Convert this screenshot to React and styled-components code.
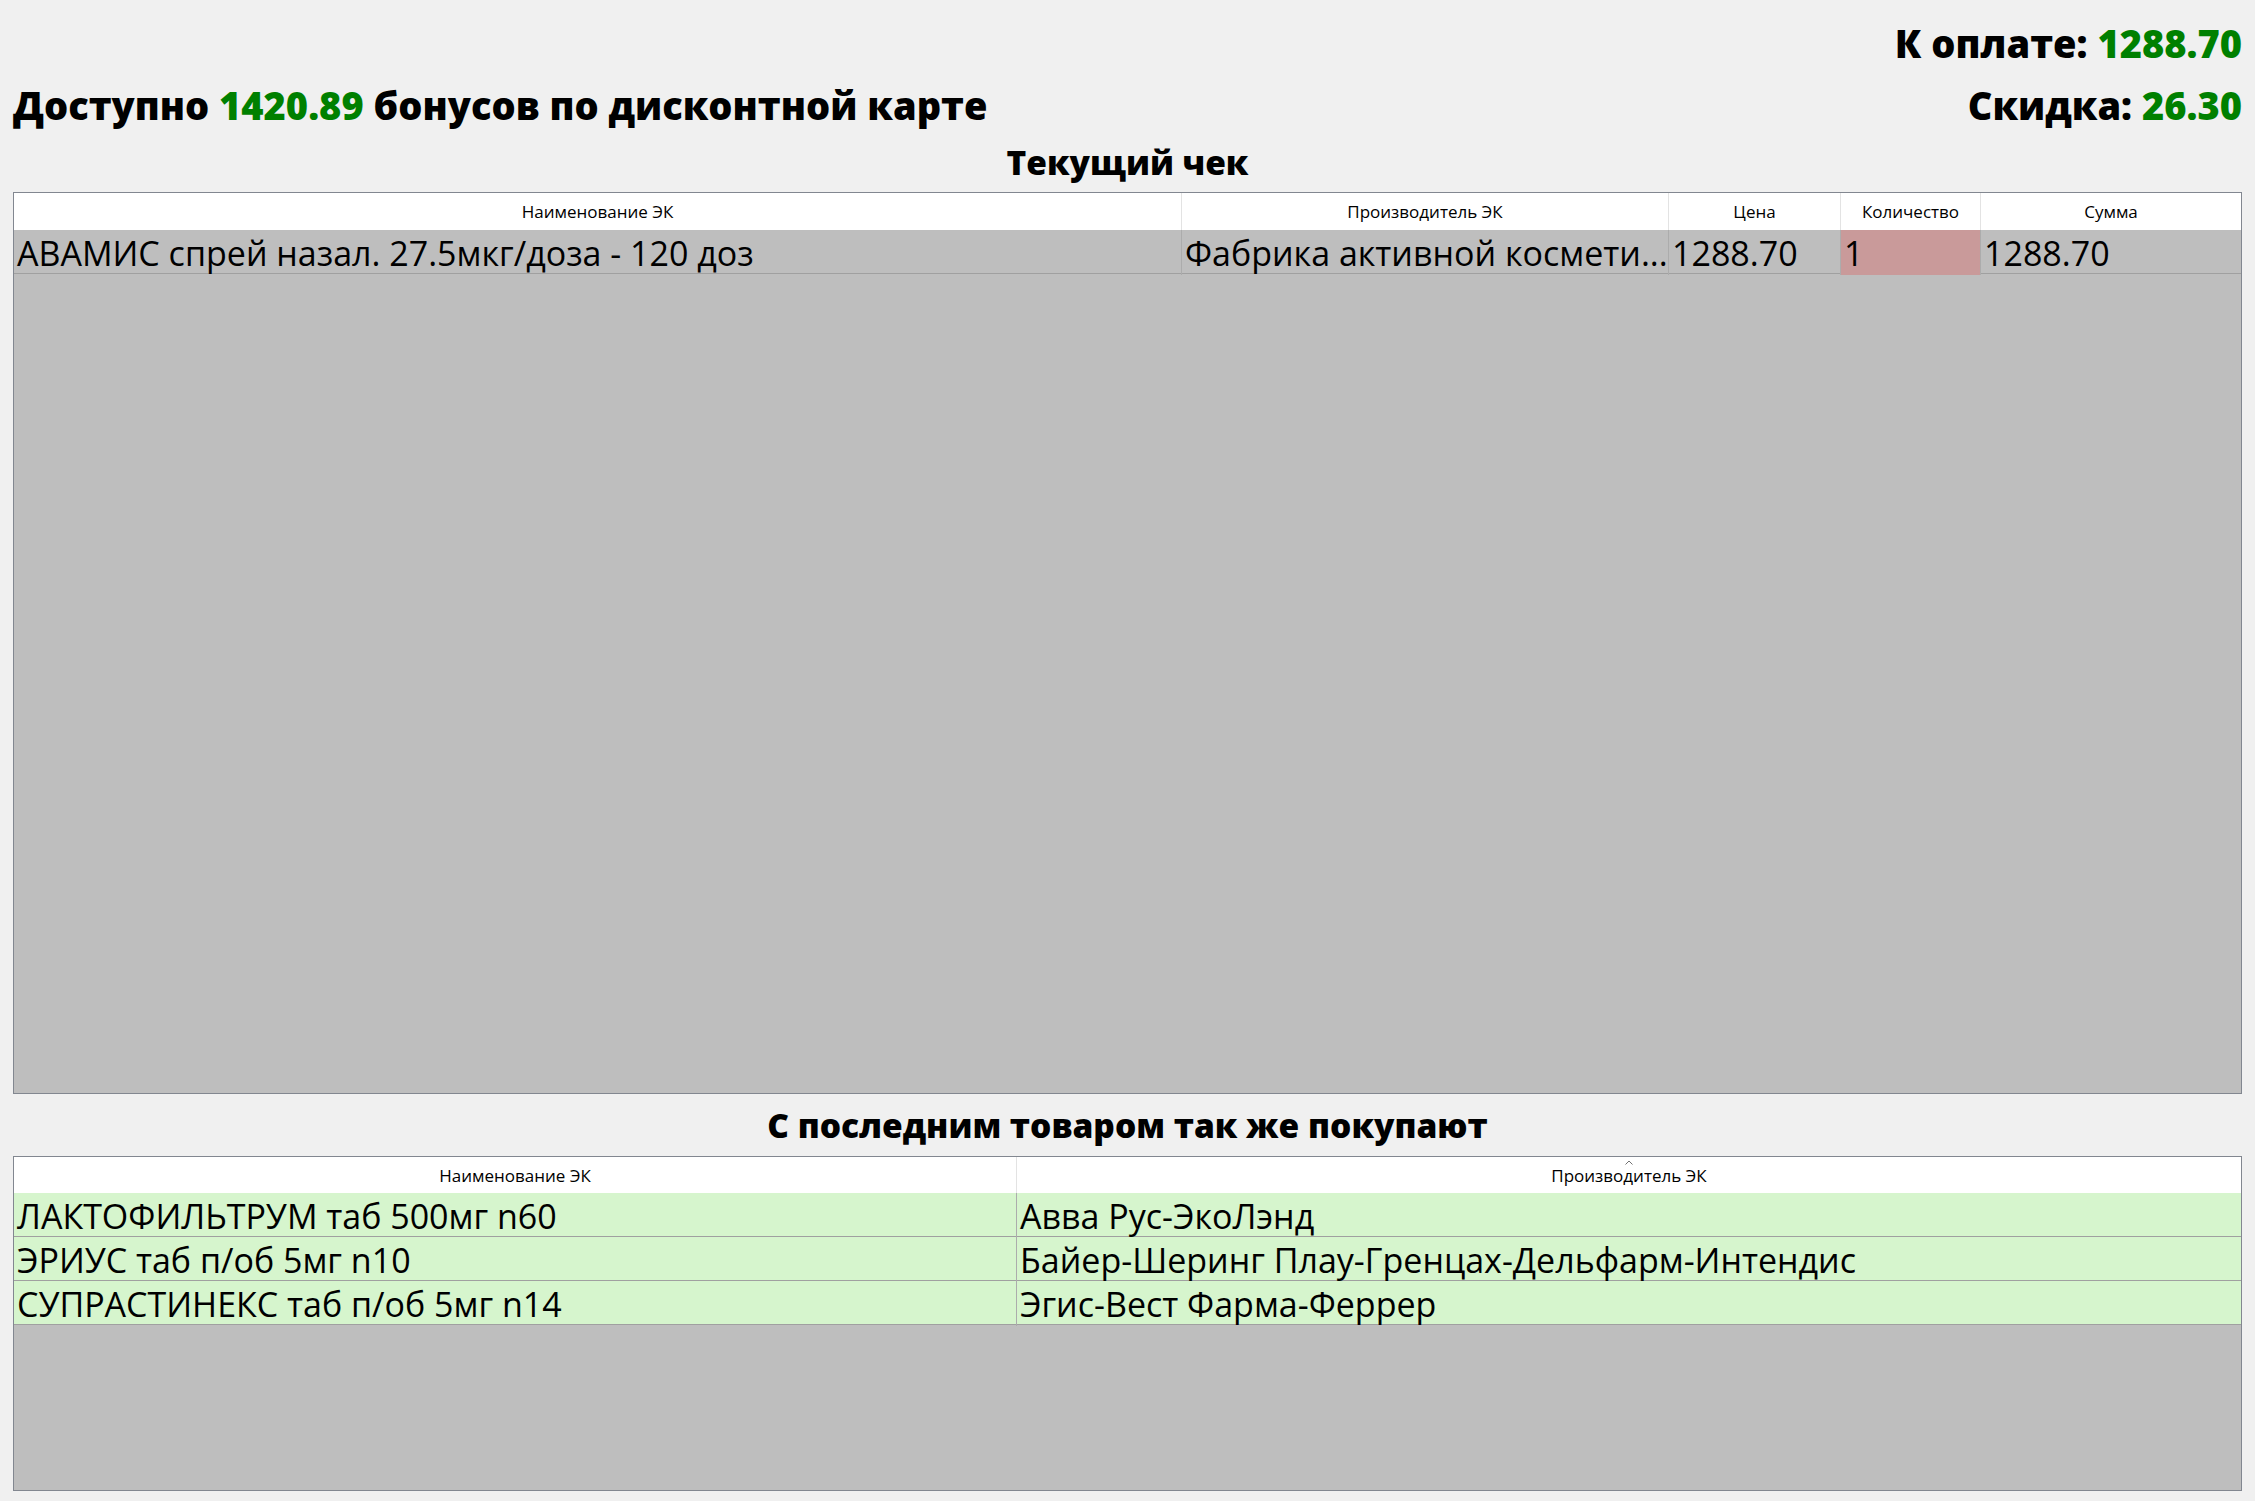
import React from "react";
import styled, { createGlobalStyle } from "styled-components";

const GlobalStyle = createGlobalStyle`
  html, body {
    margin: 0;
    padding: 0;
    background: #f0f0f0;
  }
  body {
    font-family: "Open Sans", "Noto Sans", "Liberation Sans", sans-serif;
    color: #000;
  }
  * { box-sizing: border-box; }
`;

const Page = styled.div`
  height: 100vh;
  padding: 0 13px 10px;
  display: flex;
  flex-direction: column;
`;

const Summary = styled.header`
  padding-top: 19px;
  display: flex;
  flex-direction: column;
  gap: 14px;
`;

const TotalLine = styled.div`
  display: flex;
  justify-content: flex-end;
`;

const InfoLine = styled.div`
  display: flex;
  justify-content: space-between;
  align-items: baseline;
`;

const Title = styled.div`
  font-weight: 800;
  font-size: 38px;
  line-height: 48px;
  white-space: nowrap;
`;

const Value = styled.span`
  color: #008000;
`;

const SectionTitle = styled.h2`
  margin: 0;
  text-align: center;
  font-weight: 800;
  font-size: 33.5px;
  line-height: ${(p) => p.$lh}px;
  padding-top: ${(p) => p.$pt || 0}px;
  white-space: nowrap;
`;

const Grid = styled.section`
  border: 1px solid #828790;
  background: #bebebe;
  display: flex;
  flex-direction: column;
  overflow: hidden;
  flex: ${(p) => (p.$fill ? "1 1 auto" : "0 0 auto")};
  height: ${(p) => (p.$height ? `${p.$height}px` : "auto")};
`;

const HeaderRow = styled.div`
  display: grid;
  grid-template-columns: ${(p) => p.$cols};
  height: ${(p) => p.$h}px;
  background: #ffffff;
  flex: none;
`;

const HeaderCell = styled.div`
  position: relative;
  display: flex;
  align-items: center;
  justify-content: center;
  font-size: 17px;
  white-space: nowrap;
  border-right: 1px solid #e3e3e3;
  &:last-child {
    border-right: none;
  }
`;

const SortCaret = styled.svg`
  position: absolute;
  top: 3px;
  left: 50%;
  transform: translateX(-50%);
`;

const Row = styled.div`
  display: grid;
  grid-template-columns: ${(p) => p.$cols};
  height: 44px;
  background: ${(p) => p.$bg};
  border-bottom: 1px solid #a0a0a0;
  flex: none;
`;

const Cell = styled.div`
  padding: 2px 0 0 3px;
  font-size: 34px;
  line-height: 43px;
  white-space: nowrap;
  overflow-x: clip;
  overflow-y: visible;
  background: ${(p) => p.$bg || "transparent"};
  border-right: 1px solid #acacac;
  &:last-child {
    border-right: none;
  }
`;

const checkCols = "1168px 487px 172px 140px 1fr";
const alsoCols = "1003px 1fr";

const checkRows = [
  {
    name: "АВАМИС спрей назал. 27.5мкг/доза - 120 доз",
    maker: "Фабрика активной космети...",
    price: "1288.70",
    qty: "1",
    sum: "1288.70",
  },
];

const alsoRows = [
  { name: "ЛАКТОФИЛЬТРУМ таб 500мг n60", maker: "Авва Рус-ЭкоЛэнд" },
  { name: "ЭРИУС таб п/об 5мг n10", maker: "Байер-Шеринг Плау-Гренцах-Дельфарм-Интендис" },
  { name: "СУПРАСТИНЕКС таб п/об 5мг n14", maker: "Эгис-Вест Фарма-Феррер" },
];

export default function App() {
  return (
    <>
      <GlobalStyle />
      <Page>
        <Summary>
          <TotalLine>
            <Title>
              К оплате: <Value>1288.70</Value>
            </Title>
          </TotalLine>
          <InfoLine>
            <Title>
              Доступно <Value>1420.89</Value> бонусов по дисконтной карте
            </Title>
            <Title>
              Скидка: <Value>26.30</Value>
            </Title>
          </InfoLine>
        </Summary>

        <SectionTitle $lh={60} $pt={3}>Текущий чек</SectionTitle>

        <Grid $fill>
          <HeaderRow $cols={checkCols} $h={37}>
            <HeaderCell>Наименование ЭК</HeaderCell>
            <HeaderCell>Производитель ЭК</HeaderCell>
            <HeaderCell>Цена</HeaderCell>
            <HeaderCell>Количество</HeaderCell>
            <HeaderCell>Сумма</HeaderCell>
          </HeaderRow>
          {checkRows.map((r) => (
            <Row key={r.name} $cols={checkCols} $bg="#bebebe">
              <Cell>{r.name}</Cell>
              <Cell>{r.maker}</Cell>
              <Cell>{r.price}</Cell>
              <Cell $bg="#c99a9a">{r.qty}</Cell>
              <Cell>{r.sum}</Cell>
            </Row>
          ))}
        </Grid>

        <SectionTitle $lh={62}>С последним товаром так же покупают</SectionTitle>

        <Grid $height={335}>
          <HeaderRow $cols={alsoCols} $h={36}>
            <HeaderCell>Наименование ЭК</HeaderCell>
            <HeaderCell>
              <SortCaret width="8" height="5" viewBox="0 0 8 5">
                <path d="M0.5 4.5 L4 1 L7.5 4.5" fill="none" stroke="#707070" strokeWidth="1" />
              </SortCaret>
              Производитель ЭК
            </HeaderCell>
          </HeaderRow>
          {alsoRows.map((r) => (
            <Row key={r.name} $cols={alsoCols} $bg="#d6f5cd">
              <Cell>{r.name}</Cell>
              <Cell>{r.maker}</Cell>
            </Row>
          ))}
        </Grid>
      </Page>
    </>
  );
}
